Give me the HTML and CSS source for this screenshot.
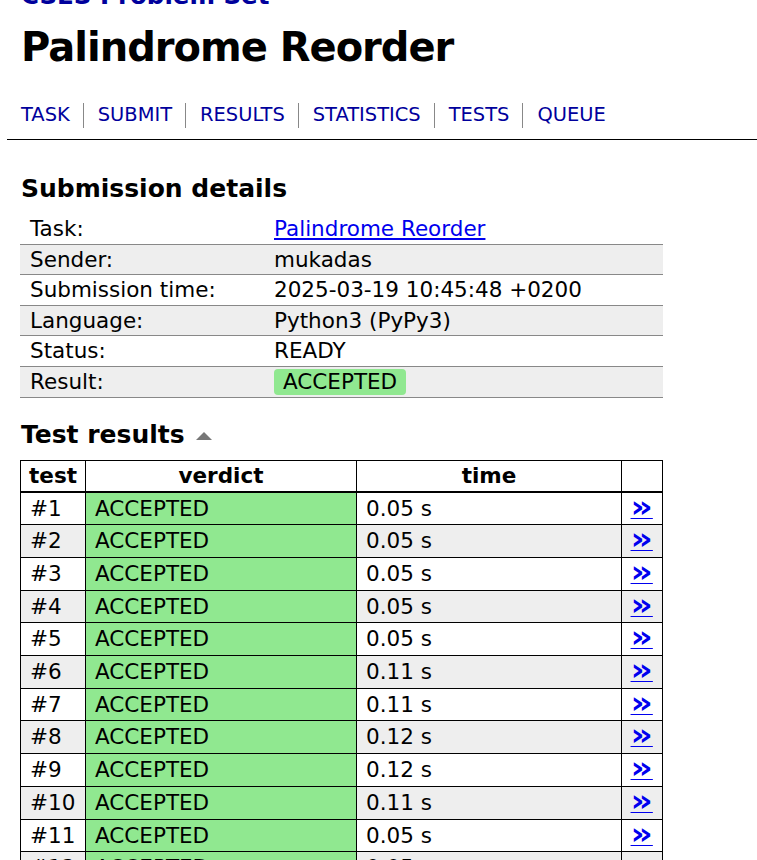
FILE: index.html
```html
<!DOCTYPE html>
<html lang="en">
<head>
<meta charset="utf-8">
<title>CSES - Palindrome Reorder - Results</title>
<link rel="stylesheet" href="styles.css">
</head>
<body>
<div class="skeleton">
  <div class="navigation">
    <div class="title-block">
      <a class="site-title" href="#">CSES Problem Set</a>
      <h1 class="task-title">Palindrome Reorder</h1>
      <ul class="task-nav">
        <li><a href="#">TASK</a></li>
        <li><a href="#">SUBMIT</a></li>
        <li><a href="#">RESULTS</a></li>
        <li><a href="#">STATISTICS</a></li>
        <li><a href="#">TESTS</a></li>
        <li><a href="#">QUEUE</a></li>
      </ul>
    </div>
  </div>
  <div class="content">
    <h2 class="section-title">Submission details</h2>
    <table class="summary-table">
      <tr><td class="label">Task:</td><td><a class="task-link" href="#">Palindrome Reorder</a></td></tr>
      <tr class="alt"><td class="label">Sender:</td><td>mukadas</td></tr>
      <tr><td class="label">Submission time:</td><td>2025-03-19 10:45:48 +0200</td></tr>
      <tr class="alt"><td class="label">Language:</td><td>Python3 (PyPy3)</td></tr>
      <tr><td class="label">Status:</td><td>READY</td></tr>
      <tr class="alt"><td class="label">Result:</td><td><span class="badge">ACCEPTED</span></td></tr>
    </table>

    <h2 class="section-title">Test results <span class="toggle"></span></h2>
    <table class="tests-table">
      <colgroup>
        <col class="c-test"><col class="c-verdict"><col class="c-time"><col class="c-link">
      </colgroup>
      <thead>
        <tr><th>test</th><th>verdict</th><th>time</th><th></th></tr>
      </thead>
      <tbody>
        <tr><td>#1</td><td class="ok">ACCEPTED</td><td>0.05 s</td><td class="lk"><a href="#">»</a></td></tr>
        <tr><td>#2</td><td class="ok">ACCEPTED</td><td>0.05 s</td><td class="lk"><a href="#">»</a></td></tr>
        <tr><td>#3</td><td class="ok">ACCEPTED</td><td>0.05 s</td><td class="lk"><a href="#">»</a></td></tr>
        <tr><td>#4</td><td class="ok">ACCEPTED</td><td>0.05 s</td><td class="lk"><a href="#">»</a></td></tr>
        <tr><td>#5</td><td class="ok">ACCEPTED</td><td>0.05 s</td><td class="lk"><a href="#">»</a></td></tr>
        <tr><td>#6</td><td class="ok">ACCEPTED</td><td>0.11 s</td><td class="lk"><a href="#">»</a></td></tr>
        <tr><td>#7</td><td class="ok">ACCEPTED</td><td>0.11 s</td><td class="lk"><a href="#">»</a></td></tr>
        <tr><td>#8</td><td class="ok">ACCEPTED</td><td>0.12 s</td><td class="lk"><a href="#">»</a></td></tr>
        <tr><td>#9</td><td class="ok">ACCEPTED</td><td>0.12 s</td><td class="lk"><a href="#">»</a></td></tr>
        <tr><td>#10</td><td class="ok">ACCEPTED</td><td>0.11 s</td><td class="lk"><a href="#">»</a></td></tr>
        <tr><td>#11</td><td class="ok">ACCEPTED</td><td>0.05 s</td><td class="lk"><a href="#">»</a></td></tr>
        <tr><td>#12</td><td class="ok">ACCEPTED</td><td>0.05 s</td><td class="lk"><a href="#">»</a></td></tr>
      </tbody>
    </table>
  </div>
</div>
</body>
</html>
```
FILE: styles.css
```css
html, body {
  margin: 0;
  padding: 0;
  background: #fff;
  color: #000;
  font-family: "DejaVu Sans", Verdana, sans-serif;
}

.skeleton {
  margin-left: 7px;
  margin-top: -19px;
}

.navigation {
  border-bottom: 1px solid #000;
}

.title-block {
  padding-left: 14px;
  padding-bottom: 11px;
  display: flex;
  flex-direction: column;
  align-items: flex-start;
}

.site-title {
  display: block;
  font-size: 24.5px;
  line-height: 30px;
  font-weight: bold;
  color: #00009c;
  text-decoration: none;
}

.task-title {
  margin: 12px 0 0 0;
  font-size: 40px;
  line-height: 48px;
  letter-spacing: -1px;
  font-weight: bold;
}

.task-nav {
  list-style: none;
  margin: 32px 0 0 0;
  padding: 0;
  display: flex;
}

.task-nav li {
  line-height: 24px;
  padding: 0 13px 0 14px;
  border-left: 1px solid #888;
}

.task-nav li:first-child {
  padding-left: 0;
  border-left: none;
}

.task-nav a {
  font-size: 19.45px;
  color: #00009c;
  text-decoration: none;
}

.content {
  padding-left: 13px;
}

.section-title {
  margin: 0 0 10px 0;
  font-size: 25px;
  line-height: 30px;
  font-weight: bold;
  padding-left: 1px;
  display: flex;
  align-items: center;
}

.content > .section-title:first-child {
  margin-top: 34px;
}

.summary-table + .section-title {
  margin-top: 22px;
}

.toggle {
  display: inline-block;
  width: 0;
  height: 0;
  margin-left: 11px;
  margin-top: 2px;
  border-left: 8px solid transparent;
  border-right: 8px solid transparent;
  border-bottom: 8px solid #777;
}

.summary-table {
  width: 643px;
  border-collapse: collapse;
  font-size: 21.5px;
}

.summary-table td {
  padding: 1px 10px 0 10px;
  line-height: 28.6px;
  border-bottom: 1px solid #888;
  vertical-align: middle;
  white-space: nowrap;
}

.summary-table td.label {
  width: 224px;
}

.summary-table tr.alt td {
  background: #eee;
}

.task-link {
  color: #0000ee;
  text-decoration: underline;
}

.badge {
  display: inline-block;
  background: #90e890;
  border-radius: 4px;
  padding: 0 9px;
  line-height: 26px;
}

.tests-table {
  width: 643px;
  border-collapse: collapse;
  font-size: 21.5px;
  border: 1px solid #000;
}

.c-test { width: 65px; }
.c-verdict { width: 271px; }
.c-time { width: 265px; }
.c-link { width: 41px; }

.tests-table th {
  font-weight: bold;
  text-align: center;
  line-height: 30px;
  padding: 0;
  border: 1px solid #000;
  border-bottom: 2px solid #000;
}

.tests-table td {
  line-height: 31.7px;
  padding: 0 9px;
  border: 1px solid #000;
  white-space: nowrap;
}

.tests-table tbody tr:nth-child(even) td {
  background: #eee;
}

.tests-table tbody tr td.ok {
  background: #90e890;
}

.tests-table td.lk {
  padding: 0;
  text-align: center;
}

.tests-table td.lk a {
  display: inline-block;
  color: #0000ee;
  font-weight: bold;
  font-size: 30px;
  line-height: 22px;
  height: 25px;
  margin-top: -3px;
  vertical-align: middle;
  text-decoration: underline;
  text-decoration-thickness: 1px;
  transform: scaleX(1.15);
}
```
